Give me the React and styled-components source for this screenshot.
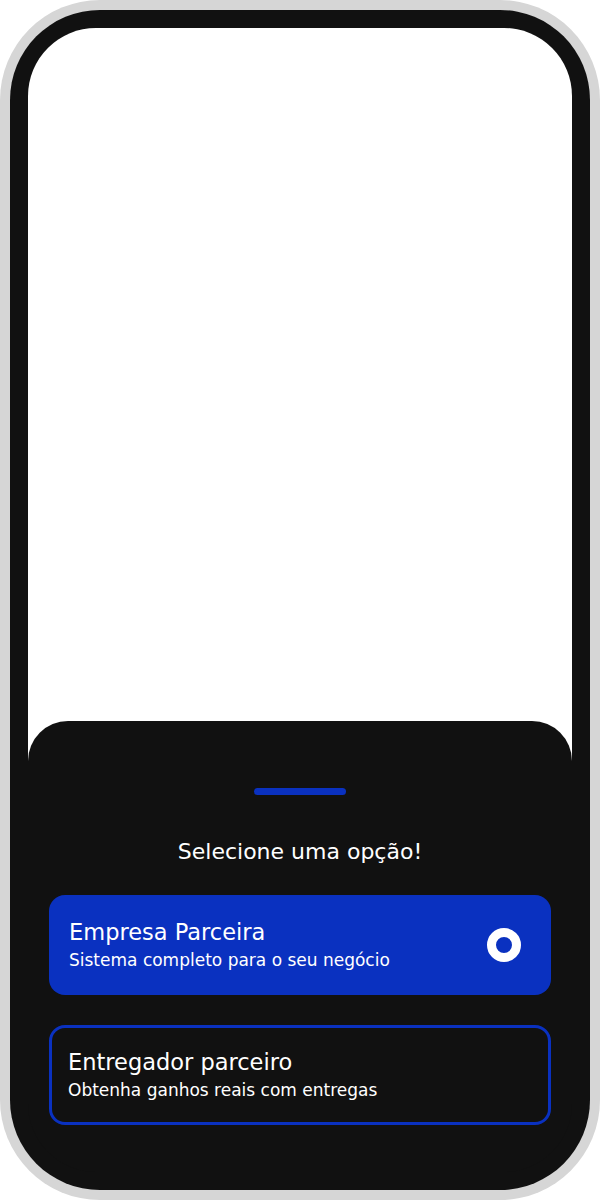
import React, { useState } from 'react';
import styled, { createGlobalStyle } from 'styled-components';

const GlobalStyle = createGlobalStyle`
  * { box-sizing: border-box; }
  html, body { margin: 0; padding: 0; background: #ffffff; }
  body { font-family: 'DejaVu Sans', 'Noto Sans', sans-serif; }
`;

const Frame = styled.div`
  width: 600px;
  height: 1200px;
  padding: 10px;
  border-radius: 100px;
  background: #d6d6d6;
`;

const Bezel = styled.div`
  width: 100%;
  height: 100%;
  padding: 18px;
  border-radius: 90px;
  background: #111111;
`;

const Screen = styled.div`
  width: 100%;
  height: 100%;
  display: flex;
  flex-direction: column;
  justify-content: flex-end;
  border-radius: 68px;
  overflow: hidden;
  background: linear-gradient(#ffffff 0 80%, #111111 80%);
`;

const Sheet = styled.div`
  display: flex;
  flex-direction: column;
  align-items: center;
  padding: 67px 21px 47px;
  border-radius: 40px 40px 0 0;
  background: #111111;
`;

const Handle = styled.div`
  width: 92px;
  height: 7px;
  border-radius: 4px;
  background: #0a31c0;
`;

const Title = styled.h2`
  margin: 43px 0 29px;
  font-size: 22px;
  line-height: 28px;
  font-weight: 400;
  color: #ffffff;
`;

const Options = styled.div`
  width: 100%;
  display: flex;
  flex-direction: column;
  gap: 30px;
`;

const Card = styled.button`
  width: 100%;
  height: 100px;
  display: flex;
  align-items: center;
  justify-content: space-between;
  padding: ${(p) => (p.$active ? '0 30px 0 20px' : '0 30px 0 16px')};
  border: ${(p) => (p.$active ? 'none' : '3px solid #0a31c0')};
  border-radius: 16px;
  background: ${(p) => (p.$active ? '#0a31c0' : '#111111')};
  color: #ffffff;
  font-family: inherit;
  text-align: left;
  cursor: pointer;
`;

const Texts = styled.div`
  display: flex;
  flex-direction: column;
  gap: 3px;
  margin-top: -2px;
`;

const CardTitle = styled.span`
  font-size: 22.5px;
  line-height: 28px;
`;

const CardSub = styled.span`
  font-size: 17px;
  line-height: 22px;
`;

const Radio = styled.span`
  width: 34px;
  height: 34px;
  border-radius: 50%;
  border: 9px solid #ffffff;
  flex: none;
`;

const options = [
  { id: 'empresa', title: 'Empresa Parceira', sub: 'Sistema completo para o seu negócio' },
  { id: 'entregador', title: 'Entregador parceiro', sub: 'Obtenha ganhos reais com entregas' },
];

export default function App() {
  const [selected, setSelected] = useState('empresa');
  return (
    <>
      <GlobalStyle />
      <Frame>
        <Bezel>
          <Screen>
            <Sheet>
              <Handle />
              <Title>Selecione uma opção!</Title>
              <Options>
                {options.map((o) => (
                  <Card key={o.id} $active={selected === o.id} onClick={() => setSelected(o.id)}>
                    <Texts>
                      <CardTitle>{o.title}</CardTitle>
                      <CardSub>{o.sub}</CardSub>
                    </Texts>
                    {selected === o.id && <Radio />}
                  </Card>
                ))}
              </Options>
            </Sheet>
          </Screen>
        </Bezel>
      </Frame>
    </>
  );
}
